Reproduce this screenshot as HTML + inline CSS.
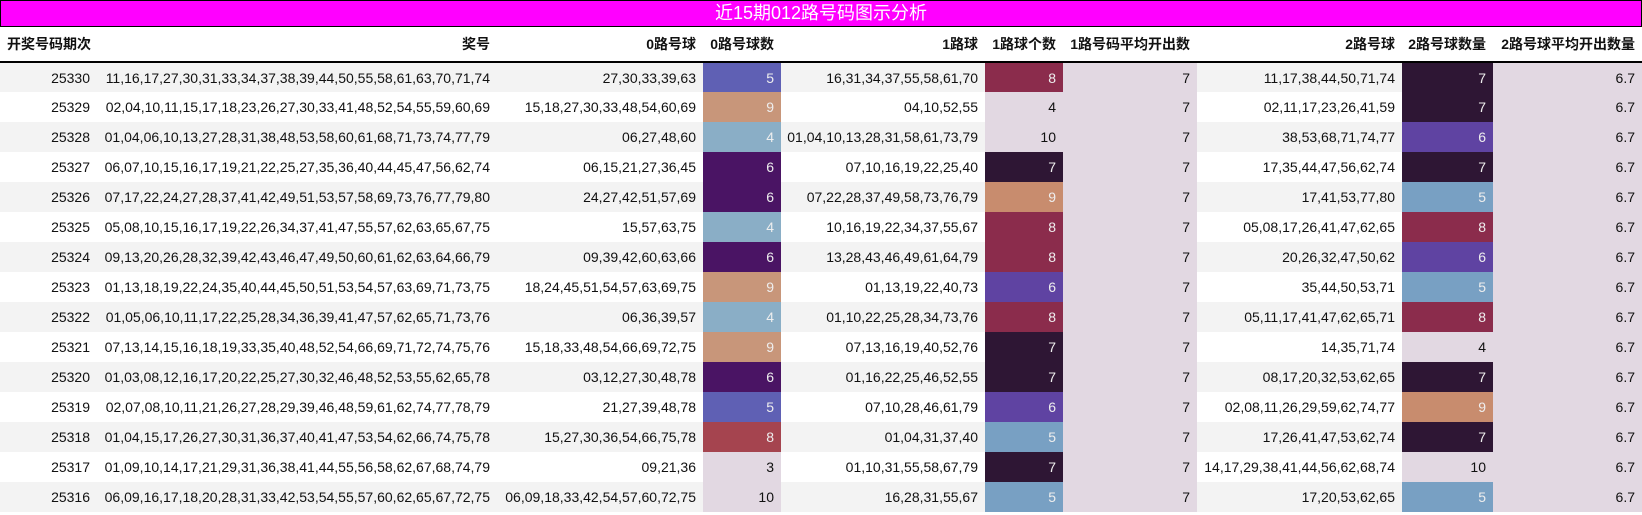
<!DOCTYPE html>
<html><head><meta charset="utf-8"><style>
*{margin:0;padding:0;box-sizing:border-box}
body{width:1642px;height:515px;background:#fff;font-family:"Liberation Sans","Noto Sans CJK SC",sans-serif;font-size:14px;color:#111;overflow:hidden}
.title{height:27px;background:#ff00ff;border:1px solid #000;color:#fff;font-size:18px;text-align:center;line-height:25px}
table{border-collapse:collapse;table-layout:fixed;width:1642px}
th{height:35px;font-weight:bold;text-align:right;padding-right:7px;border-bottom:2px solid #000;white-space:nowrap}
th:first-child{text-align:left;padding-left:7px}
td{height:30px;text-align:right;padding-right:7px;white-space:nowrap}
tbody tr:nth-child(odd) td{background:#f3f3f3}
tbody tr:nth-child(even) td{background:#fff}
tbody tr td.a{background:#e2d8e2}
tbody tr td.L{background:#e2d8e2;color:#111}
tbody tr td.c5a{background:#5f60b4;color:#eee}
tbody tr td.c9a{background:#c8967a;color:#eee}
tbody tr td.c4a{background:#8aaec6;color:#eee}
tbody tr td.c6a{background:#4a1464;color:#eee}
tbody tr td.c8a{background:#a5444f;color:#eee}
tbody tr td.c8{background:#8b2c4c;color:#eee}
tbody tr td.c7{background:#2e1634;color:#eee}
tbody tr td.c9{background:#c88c6e;color:#eee}
tbody tr td.c6{background:#5f43a2;color:#eee}
tbody tr td.c5{background:#78a0c3;color:#eee}
</style></head><body>
<div class="title">近15期012路号码图示分析</div>
<table>
<colgroup><col style="width:97px"><col style="width:400px"><col style="width:206px"><col style="width:78px"><col style="width:204px"><col style="width:78px"><col style="width:134px"><col style="width:205px"><col style="width:91px"><col style="width:149px"></colgroup>
<thead><tr><th>开奖号码期次</th><th>奖号</th><th>0路号球</th><th>0路号球数</th><th>1路球</th><th>1路球个数</th><th>1路号码平均开出数</th><th>2路号球</th><th>2路号球数量</th><th>2路号球平均开出数量</th></tr></thead>
<tbody>
<tr><td>25330</td><td>11,16,17,27,30,31,33,34,37,38,39,44,50,55,58,61,63,70,71,74</td><td>27,30,33,39,63</td><td class="c5a">5</td><td>16,31,34,37,55,58,61,70</td><td class="c8">8</td><td class="a">7</td><td>11,17,38,44,50,71,74</td><td class="c7">7</td><td class="a">6.7</td></tr>
<tr><td>25329</td><td>02,04,10,11,15,17,18,23,26,27,30,33,41,48,52,54,55,59,60,69</td><td>15,18,27,30,33,48,54,60,69</td><td class="c9a">9</td><td>04,10,52,55</td><td class="L">4</td><td class="a">7</td><td>02,11,17,23,26,41,59</td><td class="c7">7</td><td class="a">6.7</td></tr>
<tr><td>25328</td><td>01,04,06,10,13,27,28,31,38,48,53,58,60,61,68,71,73,74,77,79</td><td>06,27,48,60</td><td class="c4a">4</td><td>01,04,10,13,28,31,58,61,73,79</td><td class="L">10</td><td class="a">7</td><td>38,53,68,71,74,77</td><td class="c6">6</td><td class="a">6.7</td></tr>
<tr><td>25327</td><td>06,07,10,15,16,17,19,21,22,25,27,35,36,40,44,45,47,56,62,74</td><td>06,15,21,27,36,45</td><td class="c6a">6</td><td>07,10,16,19,22,25,40</td><td class="c7">7</td><td class="a">7</td><td>17,35,44,47,56,62,74</td><td class="c7">7</td><td class="a">6.7</td></tr>
<tr><td>25326</td><td>07,17,22,24,27,28,37,41,42,49,51,53,57,58,69,73,76,77,79,80</td><td>24,27,42,51,57,69</td><td class="c6a">6</td><td>07,22,28,37,49,58,73,76,79</td><td class="c9">9</td><td class="a">7</td><td>17,41,53,77,80</td><td class="c5">5</td><td class="a">6.7</td></tr>
<tr><td>25325</td><td>05,08,10,15,16,17,19,22,26,34,37,41,47,55,57,62,63,65,67,75</td><td>15,57,63,75</td><td class="c4a">4</td><td>10,16,19,22,34,37,55,67</td><td class="c8">8</td><td class="a">7</td><td>05,08,17,26,41,47,62,65</td><td class="c8">8</td><td class="a">6.7</td></tr>
<tr><td>25324</td><td>09,13,20,26,28,32,39,42,43,46,47,49,50,60,61,62,63,64,66,79</td><td>09,39,42,60,63,66</td><td class="c6a">6</td><td>13,28,43,46,49,61,64,79</td><td class="c8">8</td><td class="a">7</td><td>20,26,32,47,50,62</td><td class="c6">6</td><td class="a">6.7</td></tr>
<tr><td>25323</td><td>01,13,18,19,22,24,35,40,44,45,50,51,53,54,57,63,69,71,73,75</td><td>18,24,45,51,54,57,63,69,75</td><td class="c9a">9</td><td>01,13,19,22,40,73</td><td class="c6">6</td><td class="a">7</td><td>35,44,50,53,71</td><td class="c5">5</td><td class="a">6.7</td></tr>
<tr><td>25322</td><td>01,05,06,10,11,17,22,25,28,34,36,39,41,47,57,62,65,71,73,76</td><td>06,36,39,57</td><td class="c4a">4</td><td>01,10,22,25,28,34,73,76</td><td class="c8">8</td><td class="a">7</td><td>05,11,17,41,47,62,65,71</td><td class="c8">8</td><td class="a">6.7</td></tr>
<tr><td>25321</td><td>07,13,14,15,16,18,19,33,35,40,48,52,54,66,69,71,72,74,75,76</td><td>15,18,33,48,54,66,69,72,75</td><td class="c9a">9</td><td>07,13,16,19,40,52,76</td><td class="c7">7</td><td class="a">7</td><td>14,35,71,74</td><td class="L">4</td><td class="a">6.7</td></tr>
<tr><td>25320</td><td>01,03,08,12,16,17,20,22,25,27,30,32,46,48,52,53,55,62,65,78</td><td>03,12,27,30,48,78</td><td class="c6a">6</td><td>01,16,22,25,46,52,55</td><td class="c7">7</td><td class="a">7</td><td>08,17,20,32,53,62,65</td><td class="c7">7</td><td class="a">6.7</td></tr>
<tr><td>25319</td><td>02,07,08,10,11,21,26,27,28,29,39,46,48,59,61,62,74,77,78,79</td><td>21,27,39,48,78</td><td class="c5a">5</td><td>07,10,28,46,61,79</td><td class="c6">6</td><td class="a">7</td><td>02,08,11,26,29,59,62,74,77</td><td class="c9">9</td><td class="a">6.7</td></tr>
<tr><td>25318</td><td>01,04,15,17,26,27,30,31,36,37,40,41,47,53,54,62,66,74,75,78</td><td>15,27,30,36,54,66,75,78</td><td class="c8a">8</td><td>01,04,31,37,40</td><td class="c5">5</td><td class="a">7</td><td>17,26,41,47,53,62,74</td><td class="c7">7</td><td class="a">6.7</td></tr>
<tr><td>25317</td><td>01,09,10,14,17,21,29,31,36,38,41,44,55,56,58,62,67,68,74,79</td><td>09,21,36</td><td class="L">3</td><td>01,10,31,55,58,67,79</td><td class="c7">7</td><td class="a">7</td><td>14,17,29,38,41,44,56,62,68,74</td><td class="L">10</td><td class="a">6.7</td></tr>
<tr><td>25316</td><td>06,09,16,17,18,20,28,31,33,42,53,54,55,57,60,62,65,67,72,75</td><td>06,09,18,33,42,54,57,60,72,75</td><td class="L">10</td><td>16,28,31,55,67</td><td class="c5">5</td><td class="a">7</td><td>17,20,53,62,65</td><td class="c5">5</td><td class="a">6.7</td></tr>
</tbody></table>
</body></html>
